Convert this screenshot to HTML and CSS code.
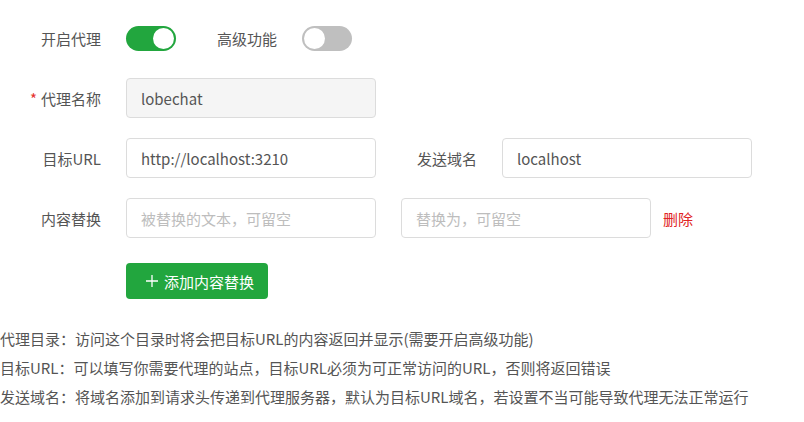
FILE: index.html
```html
<!DOCTYPE html>
<html lang="zh-CN">
<head>
<meta charset="utf-8">
<title>代理设置</title>
<link rel="stylesheet" href="styles.css">
</head>
<body>
<div class="form">
  <div class="row">
    <div class="field">
      <label class="label">开启代理</label>
      <span class="switch on"><span class="knob"></span></span>
    </div>
    <div class="field">
      <label class="label">高级功能</label>
      <span class="switch off"><span class="knob"></span></span>
    </div>
  </div>
  <div class="row">
    <div class="field">
      <label class="label"><span class="req">*</span>代理名称</label>
      <input class="input disabled" value="lobechat" disabled>
    </div>
  </div>
  <div class="row">
    <div class="field">
      <label class="label">目标URL</label>
      <input class="input" value="http://localhost:3210">
    </div>
    <div class="field">
      <label class="label">发送域名</label>
      <input class="input" value="localhost">
    </div>
  </div>
  <div class="row">
    <div class="field">
      <label class="label">内容替换</label>
      <input class="input" placeholder="被替换的文本，可留空">
    </div>
    <input class="input second" placeholder="替换为，可留空">
    <a class="del">删除</a>
  </div>
  <div class="row btn-row">
    <button class="btn"><svg width="12" height="12" viewBox="0 0 12 12"><path d="M6 0v12M0 6h12" stroke="#fff" stroke-width="1.3" fill="none"/></svg><span>添加内容替换</span></button>
  </div>
</div>
<div class="notes">
  <p>代理目录：访问这个目录时将会把目标URL的内容返回并显示(需要开启高级功能)</p>
  <p>目标URL：可以填写你需要代理的站点，目标URL必须为可正常访问的URL，否则将返回错误</p>
  <p>发送域名：将域名添加到请求头传递到代理服务器，默认为目标URL域名，若设置不当可能导致代理无法正常运行</p>
</div>
</body>
</html>
```

FILE: styles.css
```css
* { box-sizing: border-box; }
body {
  margin: 0;
  background: #fff;
  font-family: "Noto Sans CJK SC", "Noto Sans", sans-serif;
  font-size: 15px;
  color: #555;
}
.form {
  padding-top: 18px;
  display: flex;
  flex-direction: column;
  gap: 20px;
}
.row {
  display: flex;
  align-items: center;
  height: 40px;
}
.field {
  display: flex;
  align-items: center;
}
.label {
  width: 101px;
  text-align: right;
  margin-right: 25px;
  color: #555;
  white-space: nowrap;
}
.req {
  color: #e5322d;
  margin-right: 4px;
}
.switch {
  position: relative;
  display: inline-block;
  width: 50px;
  height: 25px;
  border-radius: 13px;
}
.switch.on { background: #22a63e; }
.switch.off { background: #bfbfbf; }
.knob {
  position: absolute;
  top: 2px;
  width: 21px;
  height: 21px;
  border-radius: 50%;
  background: #fff;
}
.switch.on .knob { right: 2px; }
.switch.off .knob { left: 2px; }
.input {
  width: 250px;
  height: 40px;
  border: 1px solid #dcdcdc;
  border-radius: 4px;
  padding: 0 14px;
  font-family: inherit;
  font-size: 15px;
  color: #555;
  background: #fff;
  outline: none;
}
.input::placeholder { color: #bdbdbd; }
.input.disabled { background: #f5f5f5; color: #555; }
.input.second { margin-left: 25px; }
.del {
  margin-left: 12px;
  color: #e02424;
  font-size: 15px;
}
.btn-row { padding-left: 126px; height: 41px; align-items: flex-end; }
.btn {
  display: flex;
  align-items: center;
  gap: 6px;
  height: 36px;
  padding: 0 14px 0 20px;
  background: #22a63e;
  color: #fff;
  border: none;
  border-radius: 4px;
  font-family: inherit;
  font-size: 15px;
}
.notes {
  margin-top: 25px;
}
.notes p {
  margin: 0;
  line-height: 29px;
  font-size: 15px;
  color: #555;
}
```
